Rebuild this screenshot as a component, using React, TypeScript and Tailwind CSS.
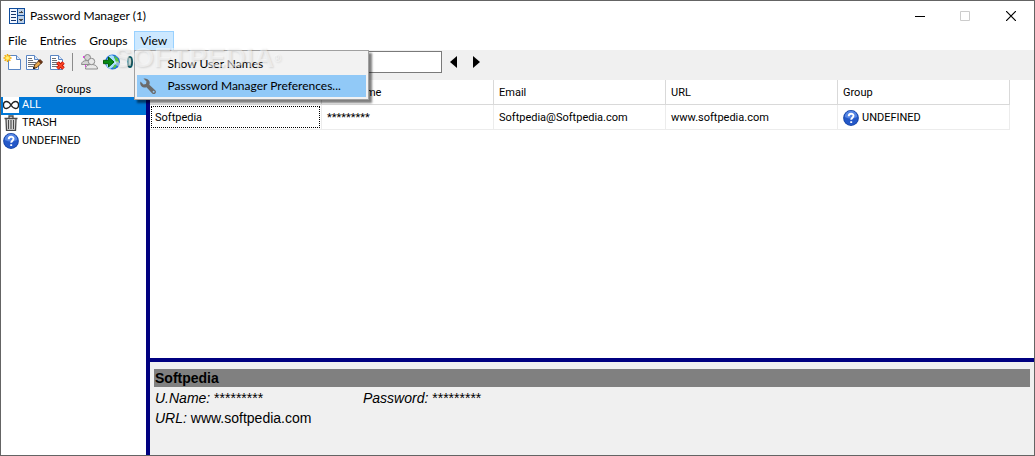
import React from "react";

const ui = "font-[Roboto,'Noto_Sans',sans-serif]";

function AppIcon() {
  return (
    <svg width="16" height="16" viewBox="0 0 16 16" shapeRendering="crispEdges" aria-hidden="true">
      <rect width="16" height="16" fill="#0f4c9c" />
      <rect x="1" y="1" width="7" height="14" fill="#f3f7ff" />
      <rect x="9" y="1" width="6" height="6" fill="#bccfe6" />
      <rect x="9" y="8" width="6" height="7" fill="#bccfe6" />
      <path d="M2 3h5v1h-5zM2 6h5v1h-5zM2 9h5v1h-5zM2 12h5v1h-5z" fill="#16366c" />
      <path d="M12 3h1v1h1v1h-4v-1h2zM10 11h4v1h-1v1h-2v-1h-1z" fill="#444" />
    </svg>
  );
}

function Page({ lines = false }: { lines?: boolean }) {
  return (
    <>
      <path d="M5.5 2.5h8l4 4v10h-12z" fill="#fff" stroke="#5a86c4" />
      <path d="M13.5 2.5v4h4" fill="#dce9fb" stroke="#5a86c4" />
      {lines && <path d="M7 5.5h4M7 7.5h5M7 9.5h8M7 11.5h7M7 13.5h5" stroke="#6c7076" />}
    </>
  );
}

function NewIcon() {
  return (
    <svg width="18" height="18" viewBox="0 0 18 18" aria-hidden="true">
      <Page />
      <path d="M4.500 1v8M.5 5h8M1.700 2.200l5.600 5.600M7.300 2.200L1.700 7.800" stroke="#f4a800" strokeWidth="1.500" />
      <circle cx="4.500" cy="5" r="2" fill="#fff27a" stroke="#ffd23a" />
    </svg>
  );
}

function EditIcon() {
  return (
    <svg width="18" height="18" viewBox="0 0 18 18" aria-hidden="true">
      <g transform="translate(-5 0)"><Page lines /></g>
      <path d="M7.500 15.500l1-3.500 4.500-4.500 2.500 2.500-4.500 4.500z" fill="#e9a94c" stroke="#4b2a12" />
      <path d="M12.500 8l1.500-1.500 2.500 2.500-1.500 1.500z" fill="#7b3516" stroke="#4b2a12" />
      <path d="M7 16l.6-2.400 1.800 1.800z" fill="#111" />
    </svg>
  );
}

function DeleteIcon() {
  return (
    <svg width="18" height="18" viewBox="0 0 18 18" aria-hidden="true">
      <g transform="translate(-4 0)"><Page lines /></g>
      <path d="M8.500 9.500l6 6M14.500 9.500l-6 6" stroke="#c81408" strokeWidth="3.600" />
      <path d="M8.500 9.500l6 6M14.500 9.500l-6 6" stroke="#ff4a28" strokeWidth="1.600" />
    </svg>
  );
}

function UsersIcon() {
  return (
    <svg width="18" height="18" viewBox="0 0 18 18" className="shrink-0" aria-hidden="true">
      <path d="M2 3h2v2H2zM4 12h1v2H4z" fill="#e83be8" />
      <g fill="#d4d4d4" stroke="#8c8c8c">
        <path d="M.5 11.500c0-2.500 2-4 5.500-4s5 2 5 4z" />
        <circle cx="6.500" cy="4.500" r="3" />
        <path d="M4.500 16c0-3 2.500-4.500 6-4.500s6 1.500 6 4.500z" fill="#e9e9e9" />
        <circle cx="10.500" cy="8.500" r="3.200" fill="#e9e9e9" />
      </g>
    </svg>
  );
}

function WebIcon() {
  return (
    <svg width="18" height="18" viewBox="0 0 18 18" className="shrink-0" aria-hidden="true">
      <circle cx="9.500" cy="9" r="7.500" fill="#1f6fdc" />
      <path d="M6 3c3-2 6 0 5 2l3 2-1 4-3 3-3 2c-3-1-4-4-4-7z" fill="#a9e0ff" />
      <path d="M11 2.500l4 3 1 4-3 0-1-3zM11 12l3-1-1 3-3 2z" fill="#58c443" />
      <path d="M.5 7.300h5V4L11 9l-5.500 5V10.700h-5z" fill="#078a13" stroke="#045e0b" />
    </svg>
  );
}

function ClipIcon() {
  return (
    <svg width="18" height="18" viewBox="0 0 18 18" className="shrink-0" aria-hidden="true">
      <ellipse cx="3" cy="9" rx="2" ry="5" fill="none" stroke="#0e5965" strokeWidth="2" />
      <path d="M3 6v6" stroke="#35a0a8" />
    </svg>
  );
}

function HelpIcon() {
  return (
    <svg width="16" height="16" viewBox="0 0 16 16" className="shrink-0" aria-hidden="true">
      <circle cx="8" cy="8" r="7.900" fill="#1646a8" />
      <circle cx="8" cy="8" r="6.900" fill="#2458c8" />
      <path d="M1.800 7a6.200 6.200 0 0 1 12.400 0C10 9 6 9 1.800 7z" fill="#5585e4" />
      <path d="M5.700 6.200c0-3.200 4.800-3.200 4.800-.4 0 1.900-2.300 1.900-2.300 4M8.200 11.200v1.900" fill="none" stroke="#fff" strokeWidth="1.900" />
    </svg>
  );
}

function TrashIcon() {
  return (
    <svg width="16" height="16" viewBox="0 0 16 16" className="shrink-0" aria-hidden="true">
      <path d="M1.500 3.500h13M6 3V1h4v2M3 4l.5 11.500h9L13 4" fill="#e4e4e4" stroke="#4a4a4a" strokeWidth="1.300" />
      <path d="M5.500 5v9M8 5v9M10.500 5v9" stroke="#4a4a4a" strokeWidth="1.200" />
    </svg>
  );
}

function AllIcon() {
  return (
    <svg width="16" height="16" viewBox="0 0 16 16" className="shrink-0" aria-hidden="true">
      <rect width="16" height="16" fill="#fff" />
      <path d="M8 8C6.500 5.500 5 4.500 3.500 4.500a3 3.500 0 0 0 0 7C5 11.500 6.500 10.500 8 8s3-3.500 4.500-3.500a3 3.500 0 0 1 0 7C11 11.500 9.500 10.500 8 8z" fill="none" stroke="#222" strokeWidth="1.300" />
    </svg>
  );
}

function WrenchIcon() {
  return (
    <svg width="18" height="18" viewBox="0 0 18 18" className="shrink-0" aria-hidden="true">
      <path d="M4.500 1.500l3 3-.5 2.500-2.500.5-3-3C.5 7 2 10 5 10.500c1 .1 1.700 0 2.500-.3l5.500 6c1 1.100 2.400 1.100 3.300.3.900-.9.900-2.200-.1-3.200L10.300 7.700c.5-1 .5-2.200.2-3.200C9.500 2 7 1 4.500 1.500z" fill="#6b6b6b" />
      <circle cx="14.600" cy="14.700" r="1" fill="#91c9f7" />
    </svg>
  );
}

const groups = [
  { name: "ALL", icon: <AllIcon />, selected: true },
  { name: "TRASH", icon: <TrashIcon />, selected: false },
  { name: "UNDEFINED", icon: <HelpIcon />, selected: false },
];

const tools = [
  { name: "New entry", icon: <NewIcon /> },
  { name: "Edit entry", icon: <EditIcon /> },
  { name: "Delete entry", icon: <DeleteIcon /> },
];

const moreTools = [
  { name: "Copy user name", icon: <UsersIcon />, size: "w-[22px]" },
  { name: "Open URL", icon: <WebIcon />, size: "w-6" },
  { name: "Copy password", icon: <ClipIcon />, size: "w-5" },
];

function TitleBar() {
  return (
    <header className="flex h-[30px] items-center bg-white pl-2">
      <AppIcon />
      <h1 className="ml-[5px] grow font-[Lato,sans-serif] text-[12px] leading-4">Password Manager (1)</h1>
      <button aria-label="Minimize" className="flex h-full w-[45px] items-center justify-center">
        <svg width="10" height="10"><path d="M0 5.500h10" stroke="#000" /></svg>
      </button>
      <button aria-label="Maximize" disabled className="flex h-full w-[45px] items-center justify-center">
        <svg width="10" height="10"><path d="M.5.5h9v9h-9z" fill="none" stroke="#ccc" /></svg>
      </button>
      <button aria-label="Close" className="flex h-full w-[47px] items-center justify-center">
        <svg width="10" height="10"><path d="M0 0l10 10M10 0L0 10" stroke="#000" strokeWidth="1.200" /></svg>
      </button>
    </header>
  );
}

function MenuBar() {
  return (
    <nav className="flex h-[19px] bg-white pl-px font-[Lato,sans-serif] text-[12px] leading-5">
      <button className="px-[6px]">File</button>
      <button className="px-[7px]">Entries</button>
      <button className="px-[6px]">Groups</button>
      <div className="relative">
        <button className="h-[19px] border border-b-0 border-[#99d1ff] bg-[#cce8ff] px-[6px] leading-[18px]" aria-expanded="true">
          View
        </button>
        <div
          role="menu"
          className="absolute top-[19px] left-0 z-10 w-[235px] border border-[#a0a0a0] bg-[#f2f2f2] p-[2px] shadow-[3px_3px_2px_rgba(0,0,0,0.5)]"
        >
          <button role="menuitem" className="block h-[22px] w-full pl-[31px] text-left leading-[22px]">
            Show User Names
          </button>
          <button role="menuitem" className="flex h-[22px] w-full items-center bg-[#91c9f7] pl-[2px] text-left leading-[22px]">
            <WrenchIcon />
            <span className="ml-[11px] whitespace-nowrap">Password Manager Preferences...</span>
          </button>
        </div>
        <div
          aria-hidden="true"
          className="pointer-events-none absolute top-[10px] -left-5 z-20 font-['Liberation_Sans',sans-serif] text-[28px] leading-[34px] font-bold whitespace-nowrap text-white/50 [text-shadow:1px_1px_2px_rgba(0,0,0,0.12)]"
        >
          SOFTPEDIA<sup className="text-[10px]">®</sup>
        </div>
      </div>
    </nav>
  );
}

function ToolBar() {
  return (
    <div className="flex h-[30px] items-start bg-[#f0f0f0] pt-px pl-[2px]" role="toolbar">
      {tools.map((t) => (
        <button key={t.name} aria-label={t.name} className="flex h-[22px] w-[23px] items-center">
          {t.icon}
        </button>
      ))}
      <div className="mt-[2px] mr-2 h-[18px] w-px bg-[#8c8c8c]" />
      {moreTools.map((t) => (
        <button key={t.name} aria-label={t.name} className={`flex h-[22px] items-center ${t.size}`}>
          {t.icon}
        </button>
      ))}
      <input
        type="search"
        aria-label="Search"
        className="ml-[21px] h-[22px] w-[274px] border border-[#7a7a7a] bg-white px-1 text-[11px] outline-none"
      />
      <button aria-label="Previous" className="ml-[5px] flex h-[22px] w-[12px] items-center justify-center">
        <svg width="7" height="12"><path d="M7 0v12L0 6z" /></svg>
      </button>
      <button aria-label="Next" className="ml-[11px] flex h-[22px] w-[12px] items-center justify-center">
        <svg width="7" height="12"><path d="M0 0v12l7-6z" /></svg>
      </button>
    </div>
  );
}

function Sidebar() {
  return (
    <aside className="flex w-[145px] shrink-0 flex-col bg-white text-[11px]">
      <h2 className="h-[17px] bg-[#f0f0f0] text-center leading-[19px]">Groups</h2>
      <ul>
        {groups.map((g) => (
          <li key={g.name}>
            <button
              className={`flex h-[18px] w-full items-start gap-[3px] pl-[2px] text-left leading-4 ${
                g.selected ? "bg-[#0078d7] text-white" : ""
              }`}
            >
              {g.icon}
              {g.name}
            </button>
          </li>
        ))}
      </ul>
    </aside>
  );
}

function Entries() {
  const head = "border-r border-b border-[#d9d9d9] px-[5px] pt-[2px] text-left font-normal";
  const cell = "border-r border-b border-[#ececec] px-[5px] pt-[2px]";
  return (
    <div className="grow bg-white">
      <table className="w-[860px] table-fixed border-separate border-spacing-0 text-[11px] leading-[18px]">
        <thead>
          <tr className="h-[25px]">
            <th className={head}>Title</th>
            <th className={head}>User Name</th>
            <th className={head}>Email</th>
            <th className={head}>URL</th>
            <th className={head}>Group</th>
          </tr>
        </thead>
        <tbody>
          <tr className="h-[25px]">
            <td className="border-r border-b border-[#ececec] p-px">
              <div className="h-[22px] border border-dotted border-black px-[3px] leading-[22px]">Softpedia</div>
            </td>
            <td className={cell}>*********</td>
            <td className={cell}>Softpedia@Softpedia.com</td>
            <td className={cell}>www.softpedia.com</td>
            <td className={cell}>
              <span className="flex items-center gap-[3px]">
                <HelpIcon />
                UNDEFINED
              </span>
            </td>
          </tr>
        </tbody>
      </table>
    </div>
  );
}

function Details() {
  return (
    <section className="h-[97px] border-t-4 border-[#000080] bg-[#f0f0f0] px-1 pt-[7px] font-['Liberation_Sans',Arial,sans-serif] text-[14px] leading-5">
      <h2 className="mb-px h-[18px] bg-[#808080] px-px leading-[18px] font-bold">Softpedia</h2>
      <div className="flex px-px">
        <p className="w-[208px]"><i>U.Name:</i> *********</p>
        <p><i>Password:</i> *********</p>
      </div>
      <p className="px-px"><i>URL:</i> www.softpedia.com</p>
    </section>
  );
}

export default function App() {
  return (
    <div className={`flex min-h-screen flex-col border border-[#646464] bg-[#f0f0f0] text-black ${ui}`}>
      <TitleBar />
      <MenuBar />
      <ToolBar />
      <div className="flex grow">
        <Sidebar />
        <main className="flex min-w-0 grow flex-col border-l-4 border-[#000080]">
          <Entries />
          <Details />
        </main>
      </div>
    </div>
  );
}
